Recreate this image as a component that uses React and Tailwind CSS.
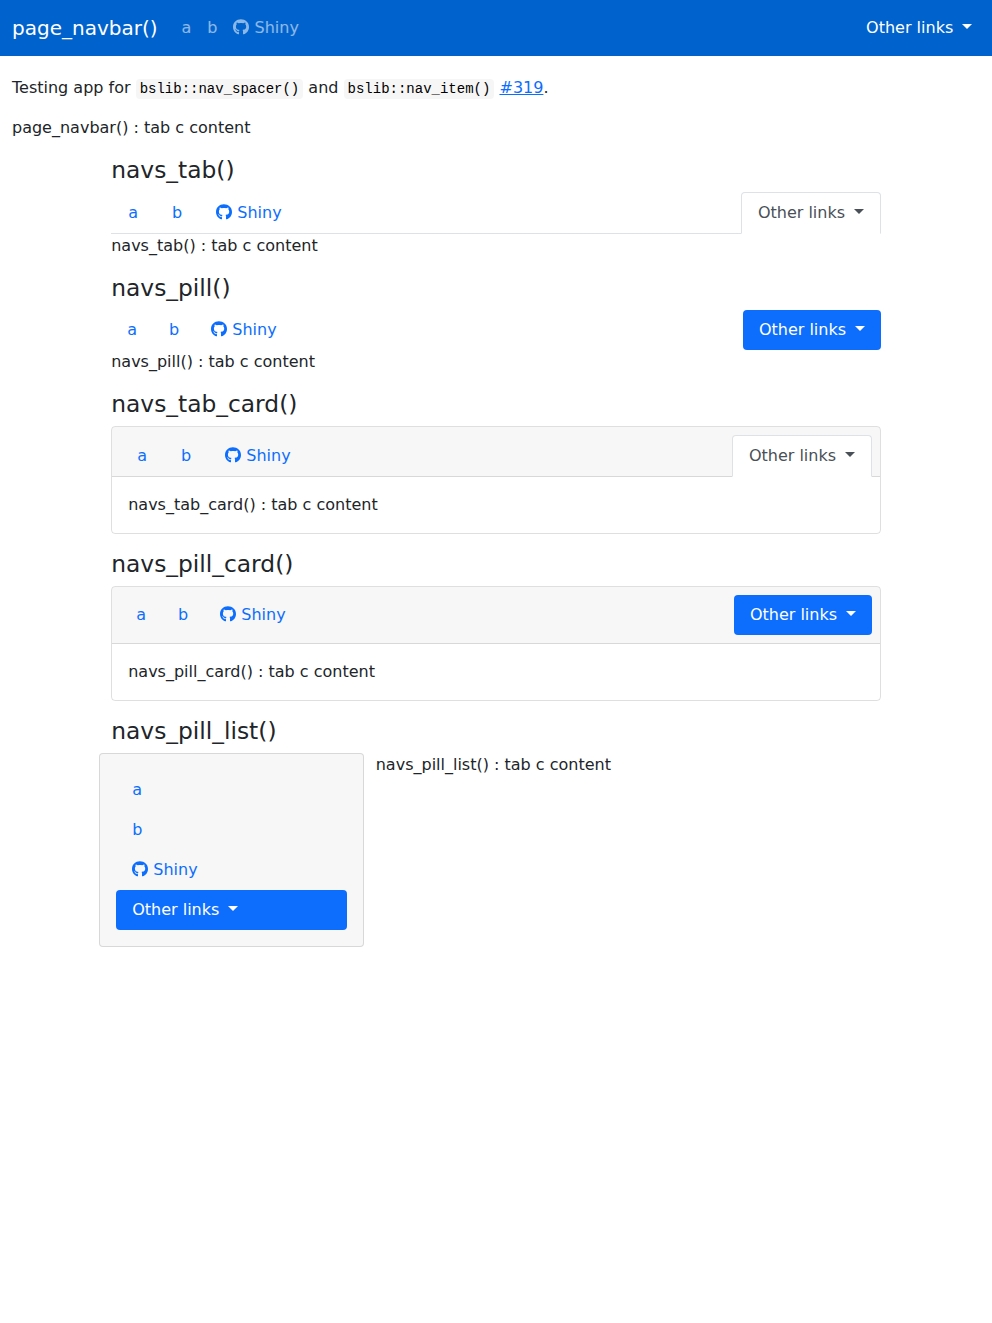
import React from "react";
import { FaGithub } from "react-icons/fa";

function Caret() {
  return (
    <span className="ml-[3.68px] inline-block border-x-[5px] border-t-[5px] border-x-transparent border-t-current align-[0.255em]" />
  );
}

function Shiny() {
  return (
    <>
      <FaGithub preserveAspectRatio="none" className="inline-block size-[1em] align-[-0.125em]" /> Shiny
    </>
  );
}

function Nav({ link, active, className = "" }) {
  return (
    <ul className={`flex ${className}`}>
      <li><a href="#a" className={`block ${link}`}>a</a></li>
      <li><a href="#b" className={`block ${link}`}>b</a></li>
      <li><a href="#shiny" className={`block ${link}`}><Shiny /></a></li>
      <li className="ml-auto [.flex-col>&]:ml-0">
        <a href="#other" className={`block ${active}`}>Other links <Caret /></a>
      </li>
    </ul>
  );
}

const tab = "-mb-px border border-transparent px-4 py-2 text-[#0d6efd]";
const tabActive = "-mb-px rounded-t border border-[#dee2e6] border-b-white bg-white px-4 py-2 text-[#495057]";
const pill = "px-4 py-2 text-[#0d6efd]";
const pillActive = "rounded bg-[#0d6efd] px-4 py-2 text-white";

function Heading({ children }) {
  return <h4 className="mt-4 mb-2 text-[23.376px] leading-[1.2] font-medium">{children}</h4>;
}

function Card({ header, children }) {
  return (
    <div className="rounded border border-black/[.125]">
      <div className="rounded-t-[3px] border-b border-black/[.125] bg-black/[.03] px-2">{header}</div>
      <div className="p-4">{children}</div>
    </div>
  );
}

function Code({ children }) {
  return (
    <code className="rounded bg-[#f6f6f6] px-1 py-0.5 font-['Liberation_Mono',monospace] text-[14px] text-black">
      {children}
    </code>
  );
}

export default function App() {
  return (
    <div className="min-h-screen bg-white font-['DejaVu_Sans',sans-serif] text-base leading-6 text-[#212529]">
      <nav className="flex h-14 items-center bg-[#0062cc] px-3">
        <a href="#top" className="mr-4 text-xl leading-[30px] text-white">page_navbar()</a>
        <Nav className="grow" link="p-2 text-white/55" active="p-2 text-white" />
      </nav>
      <main className="px-3 pt-5">
        <p className="mb-4 h-6">
          Testing app for <Code>bslib::nav_spacer()</Code> and <Code>bslib::nav_item()</Code>{" "}
          <a href="#319" className="text-[#0d6efd] underline">#319</a>.
        </p>
        <p>page_navbar() : tab c content</p>
      </main>
      <div className="mx-[10%] px-3">
        <Heading>navs_tab()</Heading>
        <Nav className="border-b border-[#dee2e6]" link={tab} active={tabActive} />
        <p>navs_tab() : tab c content</p>
        <Heading>navs_pill()</Heading>
        <Nav link={pill} active={pillActive} />
        <p>navs_pill() : tab c content</p>
        <Heading>navs_tab_card()</Heading>
        <Card header={<Nav className="-mb-px pt-2" link={`${tab} !mb-0`} active={`${tabActive} !mb-0`} />}>
          navs_tab_card() : tab c content
        </Card>
        <Heading>navs_pill_card()</Heading>
        <Card header={<Nav className="py-2" link={pill} active={pillActive} />}>
          navs_pill_card() : tab c content
        </Card>
        <Heading>navs_pill_list()</Heading>
        <div className="-mx-3 flex">
          <div className="w-1/3 rounded border border-black/[.125] bg-[#f7f7f7] p-4">
            <Nav className="flex-col" link={pill} active={pillActive} />
          </div>
          <div className="w-2/3 px-3">navs_pill_list() : tab c content</div>
        </div>
      </div>
    </div>
  );
}
